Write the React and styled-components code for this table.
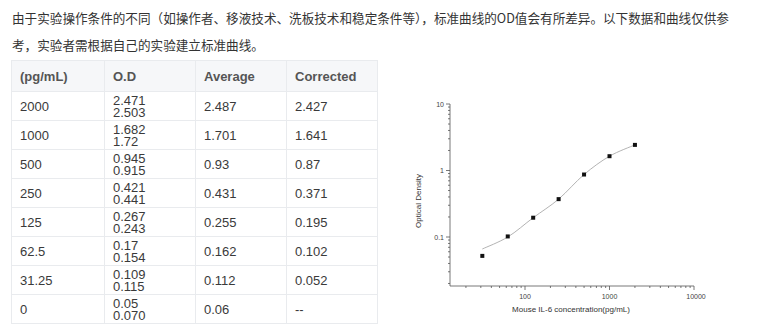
import React from "react";
import styled, { createGlobalStyle } from "styled-components";

const Global = createGlobalStyle`
  html, body { margin: 0; padding: 0; background: #fff; }
  body { font-family: "Liberation Sans", Arial, "Noto Sans CJK SC", sans-serif; color: #333; }
`;

const Page = styled.div`
  width: 758px;
  height: 330px;
  overflow: hidden;
  padding: 4px 0 0 12px;
  box-sizing: border-box;
`;

const Intro = styled.p`
  margin: 0 0 2px;
  font-family: "Noto Sans CJK SC", "Liberation Sans", sans-serif;
  font-size: 12.6px;
  line-height: 27px;
  color: #333;
  width: 730px;
`;

const Body = styled.div`
  display: flex;
  align-items: flex-start;
  margin-left: -1px;
`;

const Table = styled.table`
  border-collapse: collapse;
  table-layout: fixed;
  width: 366px;
  font-size: 13px;
  color: #3a3a3a;
`;

const Th = styled.th`
  background: #f6f7f9;
  border: 1px solid #e9ebee;
  height: 31px;
  padding: 0 0 0 8px;
  text-align: left;
  font-weight: bold;
  color: #555;
  width: ${(p) => p.$w}px;
  box-sizing: border-box;
`;

const Td = styled.td`
  border: 1px solid #e9ebee;
  height: 29px;
  padding: 0 0 0 8px;
  text-align: left;
  vertical-align: middle;
  box-sizing: border-box;
`;

const Stack = styled.div`
  display: flex;
  flex-direction: column;
  line-height: 12px;
  padding-top: 1px;
`;

const ChartBox = styled.div`
  margin: 29px 0 0 23px;
`;

const rows = [
  ["2000", ["2.471", "2.503"], "2.487", "2.427"],
  ["1000", ["1.682", "1.72"], "1.701", "1.641"],
  ["500", ["0.945", "0.915"], "0.93", "0.87"],
  ["250", ["0.421", "0.441"], "0.431", "0.371"],
  ["125", ["0.267", "0.243"], "0.255", "0.195"],
  ["62.5", ["0.17", "0.154"], "0.162", "0.102"],
  ["31.25", ["0.109", "0.115"], "0.112", "0.052"],
  ["0", ["0.05", "0.070"], "0.06", "--"],
];

const X = (v) => 124 + 84.5 * Math.log10(v / 100);
const Y = (v) => 148 - 66.5 * (Math.log10(v) + 1);

function catmull(pts) {
  let d = `M${pts[0][0]},${pts[0][1]}`;
  for (let i = 0; i < pts.length - 1; i++) {
    const p0 = pts[i - 1] || pts[i];
    const p1 = pts[i];
    const p2 = pts[i + 1];
    const p3 = pts[i + 2] || p2;
    const c1 = [p1[0] + (p2[0] - p0[0]) / 6, p1[1] + (p2[1] - p0[1]) / 6];
    const c2 = [p2[0] - (p3[0] - p1[0]) / 6, p2[1] - (p3[1] - p1[1]) / 6];
    d += ` C${c1[0].toFixed(2)},${c1[1].toFixed(2)} ${c2[0].toFixed(2)},${c2[1].toFixed(2)} ${p2[0].toFixed(2)},${p2[1].toFixed(2)}`;
  }
  return d;
}

function Chart() {
  const pts = [
    [31.25, 0.052],
    [62.5, 0.102],
    [125, 0.195],
    [250, 0.371],
    [500, 0.87],
    [1000, 1.641],
    [2000, 2.427],
  ];
  const curve = [
    [X(31.25), 160],
    [X(62.5), Y(0.1)],
    [X(125), Y(0.195)],
    [X(250), Y(0.371)],
    [X(500), Y(0.87)],
    [X(1000), Y(1.641)],
    [X(2000), Y(2.427)],
  ];
  const yTicks = [];
  [0.01, 0.1, 1].forEach((dec) => {
    for (let k = 1; k <= 9; k++) {
      const v = dec * k;
      const y = Y(v);
      if (y > 197 || y < 15) continue;
      yTicks.push(<line key={`y${v}`} x1={49} x2={k === 1 ? 45 : 47} y1={y} y2={y} />);
    }
  });
  yTicks.push(<line key="y10" x1={49} x2={45} y1={Y(10)} y2={Y(10)} />);
  const xTicks = [];
  [10, 100, 1000].forEach((dec) => {
    for (let k = 1; k <= 9; k++) {
      const v = dec * k;
      const x = X(v);
      if (x < 49) continue;
      xTicks.push(<line key={`x${v}`} x1={x} x2={x} y1={197} y2={k === 1 ? 201 : 199} />);
    }
  });
  xTicks.push(<line key="x10000" x1={X(10000)} x2={X(10000)} y1={197} y2={201} />);
  return (
    <svg width="330" height="240" viewBox="0 0 330 240">
      <g stroke="#555" strokeWidth="0.8" fill="none">
        <line x1={49} y1={15} x2={49} y2={197} />
        <line x1={49} y1={197} x2={X(10000)} y2={197} />
        {yTicks}
        {xTicks}
      </g>
      <g fontFamily="Liberation Sans, Arial, sans-serif" fontSize="7" fill="#444">
        <text x={43} y={Y(10) + 2.5} textAnchor="end">10</text>
        <text x={43} y={Y(1) + 2.5} textAnchor="end">1</text>
        <text x={43} y={Y(0.1) + 2.5} textAnchor="end">0.1</text>
        <text x={X(100)} y={210} textAnchor="middle">100</text>
        <text x={X(1000)} y={210} textAnchor="middle">1000</text>
        <text x={X(10000) + 2} y={210} textAnchor="middle">10000</text>
      </g>
      <g fontFamily="Liberation Sans, Arial, sans-serif" fontSize="8" fill="#333">
        <text x={170} y={223} textAnchor="middle">Mouse IL-6 concentration(pg/mL)</text>
        <text x={0} y={0} textAnchor="middle" transform="translate(20 112) rotate(-90)">Optical Density</text>
      </g>
      <path d={catmull(curve)} stroke="#aaa" strokeWidth="0.9" fill="none" />
      <g fill="#111">
        {pts.map(([c, o]) => (
          <rect key={c} x={X(c) - 2} y={Y(o) - 2} width="4" height="4" />
        ))}
      </g>
    </svg>
  );
}

export default function App() {
  return (
    <>
      <Global />
      <Page>
        <Intro>
          由于实验操作条件的不同（如操作者、移液技术、洗板技术和稳定条件等），标准曲线的OD值会有所差异。以下数据和曲线仅供参考，实验者需根据自己的实验建立标准曲线。
        </Intro>
        <Body>
          <Table>
            <thead>
              <tr>
                <Th $w={93}>(pg/mL)</Th>
                <Th $w={91}>O.D</Th>
                <Th $w={91}>Average</Th>
                <Th $w={91}>Corrected</Th>
              </tr>
            </thead>
            <tbody>
              {rows.map(([c, od, avg, cor]) => (
                <tr key={c}>
                  <Td>{c}</Td>
                  <Td>
                    <Stack>
                      <span>{od[0]}</span>
                      <span>{od[1]}</span>
                    </Stack>
                  </Td>
                  <Td>{avg}</Td>
                  <Td>{cor}</Td>
                </tr>
              ))}
            </tbody>
          </Table>
          <ChartBox>
            <Chart />
          </ChartBox>
        </Body>
      </Page>
    </>
  );
}
